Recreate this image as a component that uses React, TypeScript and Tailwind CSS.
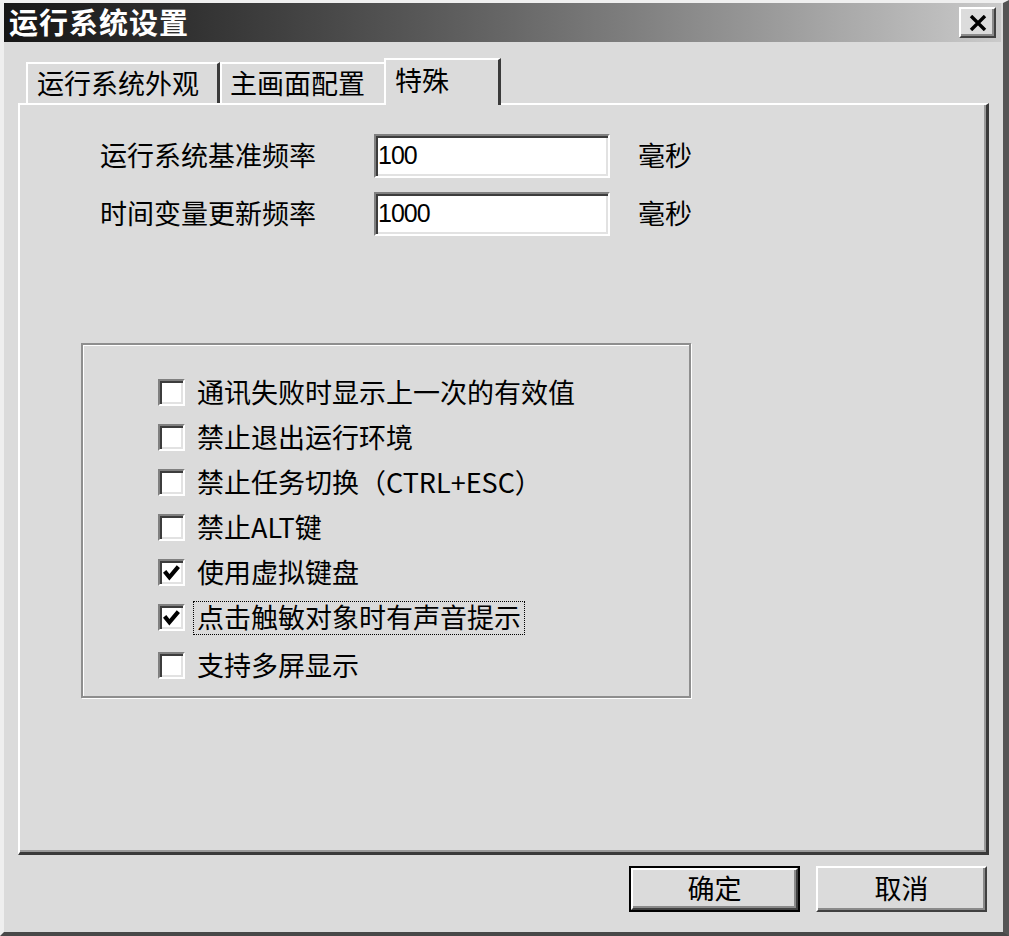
import React from "react";

const raised =
  "border-2 border-t-white border-l-white border-r-[#404040] border-b-[#404040] shadow-[inset_-2px_-2px_0_#8a8a8a]";
const sunken =
  "border-2 border-t-[#808080] border-l-[#808080] border-r-white border-b-white shadow-[inset_2px_2px_0_#3c3c3c,inset_-2px_-2px_0_#e2e2e2]";

type Opt = { label: React.ReactNode; checked?: boolean; focus?: boolean };

const options: Opt[] = [
  { label: "通讯失败时显示上一次的有效值" },
  { label: "禁止退出运行环境" },
  { label: "禁止任务切换（CTRL+ESC）" },
  { label: "禁止ALT键" },
  { label: "使用虚拟键盘", checked: true },
  { label: "点击触敏对象时有声音提示", checked: true, focus: true },
  { label: "支持多屏显示" },
];

function CheckBox({ checked }: { checked?: boolean }) {
  return (
    <div className={`w-[27px] h-[27px] bg-white flex items-center justify-center ${sunken}`}>
      {checked && (
        <svg width="19" height="19" viewBox="0 0 18 18">
          <polyline points="2.5,8 7,13.5 15.5,3.5" fill="none" stroke="#000" strokeWidth="4" />
        </svg>
      )}
    </div>
  );
}

function FieldRow({ label, value, className }: { label: string; value: string; className?: string }) {
  return (
    <div className={`flex items-center h-[44px] ${className ?? ""}`}>
      <div className="ml-[80px] w-[274px] text-[27px] leading-none pb-[4px] text-black">{label}</div>
      <div className={`w-[236px] h-[44px] bg-white flex items-center pl-[2px] pb-[2px] ${sunken}`}>
        <span className="text-[25px] leading-none font-['Liberation_Sans',sans-serif] tracking-[-1px]">{value}</span>
      </div>
      <div className="ml-[28px] text-[27px] leading-none pb-[4px]">毫秒</div>
    </div>
  );
}

export default function App() {
  return (
    <div className="w-[1009px] h-[936px] bg-[#dbdbdb] flex flex-col border-t-[3px] border-l-[4px] border-t-[#efefef] border-l-[#efefef] border-r-[6px] border-r-[#555] border-b-[4px] border-b-[#484848] font-['Noto_Sans_CJK_SC','Noto_Sans',sans-serif] text-black select-none">
      {/* title bar */}
      <div className="h-[39px] mr-[2px] bg-linear-to-r from-[#161616] via-[#666] to-[#cacaca] flex items-center justify-between pl-[5px] pr-[5px]">
        <span className="text-white text-[29px] font-bold leading-none tracking-[1px] pb-[3px]">运行系统设置</span>
        <div className={`w-[37px] h-[31px] bg-[#dcdcdc] flex items-center justify-center ${raised}`}>
          <svg width="18" height="16" viewBox="0 0 18 16">
            <path d="M2 1 L16 15 M16 1 L2 15" stroke="#000" strokeWidth="3.4" />
          </svg>
        </div>
      </div>

      {/* tabs */}
      <div className="mt-[16px] ml-[18px] mr-[14px] flex items-end h-[45px] relative z-10">
        <div className="ml-[4px] w-[194px] h-[41px] border-t-2 border-l-2 border-r-[3px] border-t-white border-l-white border-r-[#3a3a3a] flex items-center pl-[9px] pb-[3px] text-[27px] leading-none">
          运行系统外观
        </div>
        <div className="w-[164px] h-[41px] border-t-2 border-l-2 border-t-white border-l-white flex items-center pl-[8px] pb-[3px] text-[27px] leading-none">
          主画面配置
        </div>
        <div className="w-[117px] h-[47px] -mb-[2px] bg-[#dbdbdb] border-t-2 border-l-2 border-r-[3px] border-t-white border-l-white border-r-[#3a3a3a] flex items-start pt-[6px] pl-[9px] text-[27px] leading-none">
          特殊
        </div>
      </div>

      {/* panel */}
      <div className="ml-[14px] mr-[14px] h-[752px] border-t-2 border-l-2 border-t-white border-l-white border-r-[3px] border-b-[3px] border-r-[#3a3a3a] border-b-[#3a3a3a] shadow-[inset_-2px_-2px_0_#9a9a9a] flex flex-col">
        <FieldRow className="mt-[29px]" label="运行系统基准频率" value="100" />
        <FieldRow className="mt-[14px]" label="时间变量更新频率" value="1000" />

        <div className="mt-[107px] ml-[61px] w-[610px] h-[355px] border-2 border-[#8e8e8e] shadow-[inset_1px_1px_0_#fff,1px_1px_0_#fff] pl-[75px] pt-[25px] flex flex-col">
          {options.map((o, i) => (
            <div key={i} className={`flex items-center h-[45px] ${i === 6 ? "mt-[3px]" : ""}`}>
              <CheckBox checked={o.checked} />
              <div
                className={`ml-[8px] text-[27px] leading-none px-[3px] pt-[1px] pb-[4px] border border-dotted ${
                  o.focus ? "border-black" : "border-transparent"
                }`}
              >
                {o.label}
              </div>
            </div>
          ))}
        </div>
      </div>

      {/* buttons */}
      <div className="mt-[11px] mr-[16px] flex justify-end gap-[16px]">
        <div className="w-[171px] h-[46px] border-2 border-black">
          <div className={`w-full h-full flex items-center justify-center pb-[3px] text-[27px] leading-none ${raised}`}>确定</div>
        </div>
        <div className={`w-[171px] h-[46px] flex items-center justify-center pb-[3px] text-[27px] leading-none ${raised}`}>取消</div>
      </div>
    </div>
  );
}
